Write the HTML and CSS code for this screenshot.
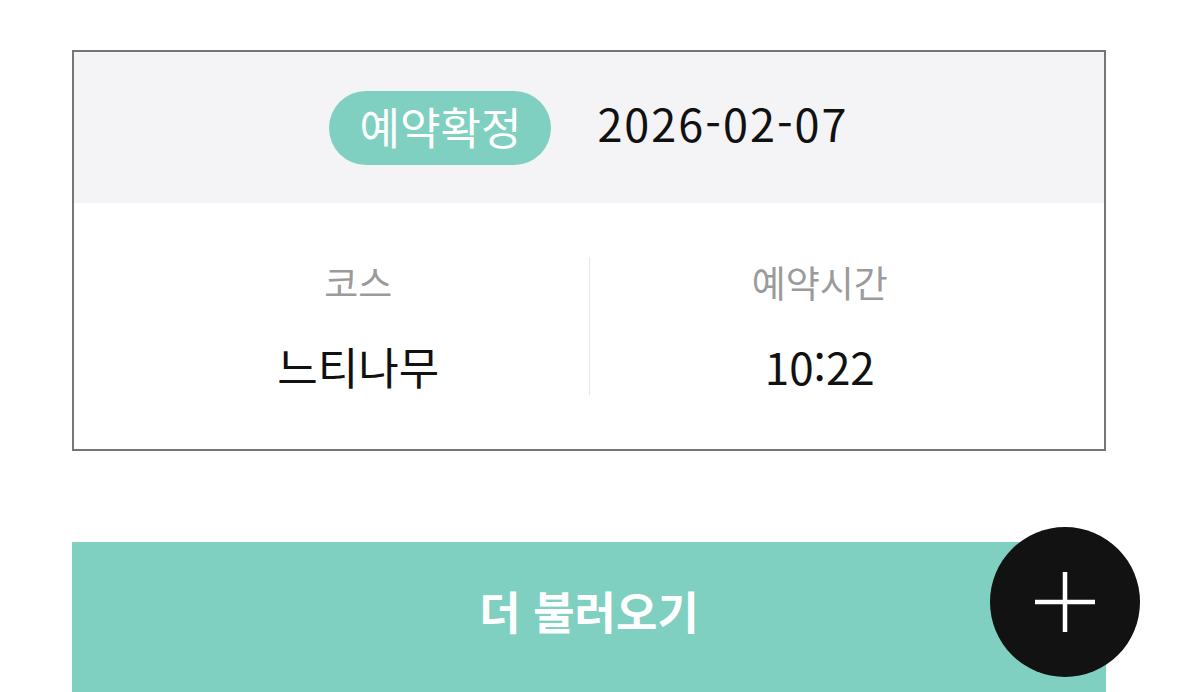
FILE: index.html
```html
<!DOCTYPE html>
<html lang="ko">
<head>
<meta charset="utf-8">
<title>예약 내역</title>
<link rel="stylesheet" href="styles.css">
</head>
<body>
<main class="page">
  <section class="card">
    <header class="card-head">
      <span class="badge">예약확정</span>
      <span class="date">2026-02-07</span>
    </header>
    <div class="card-body">
      <div class="col">
        <div class="label">코스</div>
        <div class="value">느티나무</div>
      </div>
      <div class="divider"></div>
      <div class="col">
        <div class="label">예약시간</div>
        <div class="value">10:22</div>
      </div>
    </div>
  </section>
  <button class="more" type="button">더 불러오기</button>
  <button class="fab" type="button" aria-label="추가">
    <svg width="64" height="64" viewBox="0 0 64 64"><path d="M32 2V62M2 32H62" stroke="#fff" stroke-width="4.5" fill="none"/></svg>
  </button>
</main>
</body>
</html>
```

FILE: styles.css
```css
* { box-sizing: border-box; }
html, body { margin: 0; padding: 0; background: #fff; }
body {
  font-family: "Noto Sans CJK KR", "Noto Sans", sans-serif;
  color: #111;
  overflow: hidden;
}
.page {
  position: relative;
  padding: 50px 73px 0 72px;
  height: 692px;
}
.card {
  border: 2px solid #767676;
  background: #fff;
}
.card-head {
  height: 151px;
  background: #f4f4f6;
  display: flex;
  align-items: center;
  justify-content: center;
  gap: 46px;
}
.badge {
  display: inline-flex;
  align-items: center;
  justify-content: center;
  height: 74px;
  padding: 0 30px 3px;
  border-radius: 37px;
  background: #7fd0c0;
  color: #fff;
  font-size: 44px;
  line-height: 1;
}
.date {
  font-size: 45px;
  letter-spacing: 2px;
  line-height: 1;
  color: #111;
  margin-top: -10px;
}
.card-body {
  display: flex;
  align-items: stretch;
  padding: 54px;
}
.col {
  flex: 1;
  display: flex;
  flex-direction: column;
  align-items: center;
  gap: 30px;
}
.divider {
  width: 1px;
  background: #e6e6e6;
}
.label {
  font-size: 37px;
  line-height: 50px;
  color: #9b9b9b;
}
.value {
  font-size: 44px;
  line-height: 58px;
  color: #111;
}
.more {
  display: block;
  width: 100%;
  height: 150px;
  margin-top: 91px;
  border: 0;
  background: #7fd0c0;
  color: #fff;
  font-family: inherit;
  font-size: 45px;
  font-weight: 700;
  padding: 0 0 14px;
}
.fab {
  position: absolute;
  left: 990px;
  top: 527px;
  width: 150px;
  height: 150px;
  border-radius: 50%;
  border: 0;
  background: #121212;
  display: flex;
  align-items: center;
  justify-content: center;
  padding: 0;
}
.fab svg { display: block; }
```
